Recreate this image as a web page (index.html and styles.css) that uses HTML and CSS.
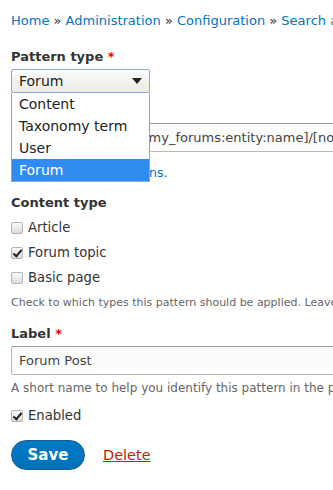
FILE: index.html
```html
<!DOCTYPE html>
<html lang="en">
  <head>
    <meta charset="UTF-8" />
    <title>Edit pattern</title>
    <link rel="stylesheet" href="styles.css">
  </head>
  <body>
    <!-- BREADCRUMB -->
    <nav class="breadcrumb">
      <a href="#">Home</a> » <a href="#">Administration</a> »
      <a href="#">Configuration</a> » <a href="#">Search and metadata</a>
    </nav>

    <form class="pattern-form">
      <!-- Pattern type with open dropdown -->
      <div class="form-item type-item">
        <label class="form-label">Pattern type <span class="req">*</span></label>
        <div class="select">
          <span>Forum</span>
          <span class="arrow"></span>
        </div>
        <ul class="select-list">
          <li>Content</li>
          <li>Taxonomy term</li>
          <li>User</li>
          <li class="selected">Forum</li>
        </ul>
      </div>

      <div class="form-item pattern-item">
        <label class="form-label">Path pattern <span class="req">*</span></label>
        <input type="text" class="text-input" value="forum/[node:taxonomy_forums:entity:name]/[node:title]" />
        <div class="description tokens"><a href="#">Browse available tokens.</a></div>
      </div>

      <!-- Content type -->
      <div class="form-item">
        <label class="form-label">Content type</label>
        <div class="check-row"><span class="box"></span>Article</div>
        <div class="check-row"><span class="box checked"></span>Forum topic</div>
        <div class="check-row"><span class="box"></span>Basic page</div>
        <div class="description small">Check to which types this pattern should be applied. Leave empty to allow any.</div>
      </div>

      <div class="form-item label-item">
        <label class="form-label">Label <span class="req">*</span></label>
        <input type="text" class="text-input" value="Forum Post" />
        <div class="description">A short name to help you identify this pattern in the patterns list.</div>
      </div>

      <div class="form-item">
        <div class="check-row"><span class="box checked"></span>Enabled</div>
      </div>

      <div class="actions">
        <button type="button" class="btn">Save</button>
        <a href="#" class="delete">Delete</a>
      </div>
    </form>
  </body>
</html>
```

FILE: styles.css
```css
* {
  box-sizing: border-box;
}

body {
  font-family: "DejaVu Sans", sans-serif;
  background-color: #fff;
  color: #333;
  margin: 0;
  padding: 0 0 0 11px;
  overflow: hidden;
  font-size: 13px;
}

a {
  color: #0074bd;
  text-decoration: none;
}

.breadcrumb {
  white-space: nowrap;
  font-size: 13px;
  line-height: 20px;
  padding-top: 11px;
  color: #333;
}

.pattern-form {
  width: 520px;
  margin-top: 17px;
}

.form-item {
  position: relative;
  margin-bottom: 10px;
}

.form-label {
  display: block;
  font-weight: bold;
  line-height: 18px;
  margin-bottom: 3px;
}

.req {
  color: #e00;
}

.type-item {
  margin-bottom: 9px;
}

.select {
  width: 139px;
  height: 24px;
  border: 1px solid #86a9dc;
  border-radius: 2px;
  background: linear-gradient(#fbfbf8, #ecece4);
  display: flex;
  align-items: center;
  justify-content: space-between;
  padding: 0 7px 0 7px;
  font-size: 14px;
  color: #222;
}

.arrow {
  width: 0;
  height: 0;
  border-left: 5px solid transparent;
  border-right: 5px solid transparent;
  border-top: 6px solid #222;
}

.select-list {
  position: absolute;
  top: 45px;
  left: 0;
  width: 139px;
  margin: 0;
  padding: 0;
  list-style: none;
  background: #fff;
  border: 1px solid #86a9dc;
  border-top: none;
  z-index: 10;
  font-size: 14px;
  color: #222;
}

.select-list li {
  height: 22px;
  line-height: 22px;
  padding-left: 7px;
}

.select-list .selected {
  background: #2f8bef;
  color: #fff;
}

.text-input {
  display: block;
  width: 100%;
  height: 29px;
  border: 1px solid #b8b8b8;
  border-top-color: #999;
  border-radius: 2px;
  background: #fcfcfa;
  font-family: inherit;
  font-size: 13px;
  color: #444;
  padding: 0 7px;
}

.description {
  font-size: 12px;
  line-height: 16px;
  color: #666;
  margin-top: 5px;
  white-space: nowrap;
}

.tokens {
  margin-top: 13px;
  font-size: 12.6px;
}

.pattern-item {
  margin-bottom: 13px;
}

.small {
  font-size: 11px;
  margin-top: 5px;
}

.label-item {
  margin-top: 14px;
  margin-bottom: 7px;
}

.check-row {
  display: flex;
  align-items: center;
  height: 25px;
  font-size: 13.2px;
}

.box {
  width: 12px;
  height: 12px;
  border: 1px solid #b4b4b4;
  border-radius: 2px;
  background: linear-gradient(#fafafa, #dcdcdc);
  margin-right: 5px;
  position: relative;
}

.box.checked::after {
  content: "";
  position: absolute;
  left: 3px;
  top: 0;
  width: 3px;
  height: 7px;
  border-right: 2px solid #222;
  border-bottom: 2px solid #222;
  transform: rotate(40deg);
}

.actions {
  display: flex;
  align-items: center;
  gap: 18px;
  margin-top: 12px;
}

.btn {
  width: 74px;
  height: 30px;
  border: 1px solid #1e5c90;
  border-radius: 20px;
  background: linear-gradient(#007bc6, #0071b8);
  color: white;
  font-family: inherit;
  font-size: 15px;
  font-weight: bold;
}

.delete {
  color: #c72100;
  text-decoration: underline;
  font-size: 14.5px;
}
```
